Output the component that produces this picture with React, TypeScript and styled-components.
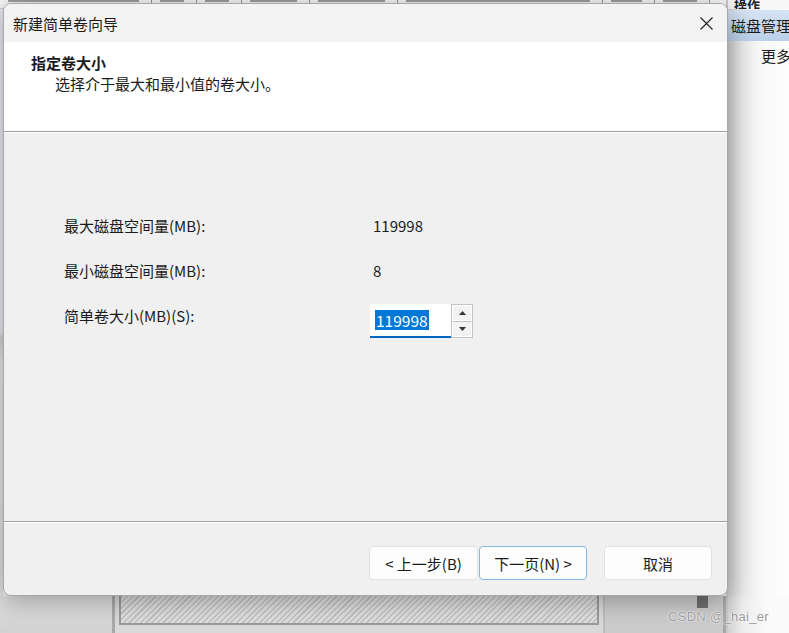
import React from "react";
import styled, { createGlobalStyle } from "styled-components";

const Global = createGlobalStyle`
  html, body { margin: 0; padding: 0; width: 789px; height: 633px; overflow: hidden; }
  body { font-family: "Noto Sans CJK SC", "Noto Sans", sans-serif; color: #1b1b1b; }
  * { box-sizing: border-box; }
`;

const Desktop = styled.div`
  position: relative;
  width: 789px;
  height: 633px;
  overflow: hidden;
  display: grid;
  grid-template-columns: 726px 63px;
  grid-template-rows: 9px 1fr 37px;
  background: #f0f0f0;
`;

const HeaderStrip = styled.div`
  display: flex;
  background: #f7f7f7;
  border-bottom: 1px solid #cfcfcf;
`;

const HeaderCell = styled.div<{ $w: number }>`
  width: ${(p) => p.$w}px;
  flex: none;
  border-right: 1px solid #9c9c9c;
  position: relative;
  &::after {
    content: "";
    position: absolute;
    left: 8px;
    right: 12px;
    top: 0;
    height: 2px;
    background: #555;
    opacity: 0.55;
  }
`;

const ActionHeader = styled.div`
  background: #f7f7f7;
  border-left: 2px solid #c8c8c8;
  font-size: 13px;
  font-weight: 700;
  line-height: 9px;
  padding-left: 6px;
  overflow: hidden;
  color: #222;
  display: flex;
  align-items: flex-end;
`;

const BackArea = styled.div`
  background: #f0f0f0;
  display: flex;
`;

const LeftEdge = styled.div`
  width: 3px;
  background: linear-gradient(to bottom, #e6e9ee 0%, #e6e9ee 55%, #d2d2d2 56%, #e6e6e6 60%, #e0e0e0 100%);
`;

const ActionPanel = styled.div`
  border-left: 2px solid #c8c8c8;
  background: linear-gradient(to right, #cfcfcf 0px, #e8e8e8 14px, #f8f8f8 34px, #fdfdfd 60px);
  display: flex;
  flex-direction: column;
  padding-top: 1px;
`;

const ActionTitle = styled.div`
  height: 31px;
  background: linear-gradient(to bottom, #d6e3f3, #b9cfe9);
  font-size: 15px;
  line-height: 31px;
  padding-left: 3px;
  white-space: nowrap;
  overflow: hidden;
  color: #1a1a1a;
`;

const ActionItem = styled.div`
  font-size: 15px;
  padding: 4px 0 0 33px;
  white-space: nowrap;
  overflow: hidden;
  color: #1a1a1a;
`;

const BottomLeft = styled.div`
  display: flex;
  background: #c9c9c9;
`;

const GrayBlock = styled.div`
  width: 115px;
  background: linear-gradient(to bottom, #dedede, #d2d2d2);
  border-right: 3px solid #a9a9a9;
`;

const HatchWrap = styled.div`
  width: 490px;
  padding: 0 4px 8px 4px;
  background: #d9d9d9;
  border-right: 2px solid #bdbdbd;
  display: flex;
  flex-direction: column;
`;

const Hatch = styled.div`
  flex: 1;
  border: 2px solid #9a9a9a;
  border-top: none;
  background: repeating-linear-gradient(
    135deg,
    #c2c2c2 0px,
    #c2c2c2 1.5px,
    #dedede 1.5px,
    #dedede 4px
  );
`;

const RightGray = styled.div`
  flex: 1;
  background: #cbcbcb;
  display: flex;
  justify-content: flex-end;
  padding-right: 15px;
  border-right: 3px solid #a8a8a8;
`;

const DarkBlock = styled.div`
  width: 11px;
  height: 12px;
  background: #6f6f6f;
`;

const BottomRight = styled.div`
  border-left: 2px solid #c8c8c8;
  background: linear-gradient(to right, #d2d2d2 0px, #ececec 14px, #fafafa 40px);
`;

const Watermark = styled.div`
  position: absolute;
  left: 668px;
  top: 609px;
  font-family: "Liberation Sans", Arial, sans-serif;
  font-size: 13px;
  color: #9a9a9a;
  text-shadow: 0 0 1px #fff, 0 0 2px #fff;
  letter-spacing: 0.3px;
`;

/* ---------- Dialog ---------- */

const Dialog = styled.div`
  position: absolute;
  left: 3px;
  top: 3px;
  width: 725px;
  height: 593px;
  border-radius: 8px;
  overflow: hidden;
  background: #f0f0f0;
  border: 1px solid #a8a8a8;
  box-shadow: 0 4px 26px rgba(0, 0, 0, 0.32);
  display: flex;
  flex-direction: column;
`;

const TitleBar = styled.div`
  height: 38px;
  flex: none;
  background: #f3f3f3;
  display: flex;
  align-items: center;
  justify-content: space-between;
  padding: 0 9px 0 9px;
  font-size: 15px;
`;

const CloseBtn = styled.div`
  width: 24px;
  height: 24px;
  display: flex;
  align-items: center;
  justify-content: center;
`;

const Banner = styled.div`
  height: 90px;
  flex: none;
  background: #ffffff;
  border-bottom: 1px solid #a0a0a0;
  box-shadow: 0 1px 0 #ffffff;
  padding: 11px 0 0 27px;
`;

const BannerTitle = styled.div`
  font-size: 15px;
  font-weight: 700;
  line-height: 20px;
`;

const BannerSub = styled.div`
  font-size: 15px;
  line-height: 22px;
  padding-left: 24px;
`;

const Body = styled.div`
  flex: 1;
  padding: 71px 0 0 60px;
  display: grid;
  grid-template-columns: 306px auto;
  grid-auto-rows: 45px;
  align-content: start;
  align-items: center;
  border-bottom: 1px solid #a0a0a0;
`;

const Label = styled.div`
  font-size: 15px;
`;

const Value = styled.div`
  font-size: 15px;
  padding-left: 3px;
`;

const SpinBox = styled.div`
  display: flex;
  align-items: stretch;
  height: 34px;
  margin-top: 10px;
`;

const SpinInput = styled.div`
  width: 81px;
  background: #ffffff;
  border-bottom: 2px solid #0067c0;
  display: flex;
  align-items: center;
  padding-left: 5px;
  font-size: 15.5px;
`;

const Selected = styled.span`
  background: #0078d7;
  color: #ffffff;
  line-height: 20px;
  padding: 0 1px;
`;

const SpinButtons = styled.div`
  width: 22px;
  display: flex;
  flex-direction: column;
  border: 1px solid #c4c4c4;
  background: #e9e9e9;
`;

const SpinBtn = styled.div<{ $down?: boolean }>`
  flex: 1;
  display: flex;
  align-items: center;
  justify-content: center;
  background: #f3f3f3;
  border: 1px solid #ffffff;
  ${(p) => (p.$down ? "border-top: 1px solid #c4c4c4;" : "")}
`;

const Footer = styled.div`
  height: 73px;
  flex: none;
  border-top: 1px solid #ffffff;
  display: flex;
  justify-content: flex-end;
  align-items: flex-start;
  padding: 23px 15px 0 0;
`;

const ButtonGroup = styled.div`
  display: flex;
  gap: 1px;
  margin-right: 17px;
`;

const Button = styled.div<{ $focused?: boolean; $w?: number }>`
  width: ${(p) => p.$w ?? 108}px;
  height: 34px;
  background: #fdfdfd;
  border: 1px solid ${(p) => (p.$focused ? "#82b7e4" : "#e1e1e1")};
  border-radius: 4px;
  display: flex;
  align-items: center;
  justify-content: center;
  font-size: 15px;
  color: #1b1b1b;
`;

const Tri = ({ down }: { down?: boolean }) => (
  <svg width="7" height="4" viewBox="0 0 7 4">
    {down ? <polygon points="0,0 7,0 3.5,4" fill="#333" /> : <polygon points="0,4 7,4 3.5,0" fill="#333" />}
  </svg>
);

export default function App() {
  const cols = [152, 45, 45, 68, 88, 205, 52, 55];
  return (
    <>
      <Global />
      <Desktop>
        <HeaderStrip>
          {cols.map((w, i) => (
            <HeaderCell key={i} $w={w} />
          ))}
        </HeaderStrip>
        <ActionHeader>操作</ActionHeader>

        <BackArea>
          <LeftEdge />
        </BackArea>
        <ActionPanel>
          <ActionTitle>磁盘管理</ActionTitle>
          <ActionItem>更多操作</ActionItem>
        </ActionPanel>

        <BottomLeft>
          <GrayBlock />
          <HatchWrap>
            <Hatch />
          </HatchWrap>
          <RightGray>
            <DarkBlock />
          </RightGray>
        </BottomLeft>
        <BottomRight />

        <Dialog>
          <TitleBar>
            <span>新建简单卷向导</span>
            <CloseBtn>
              <svg width="13" height="13" viewBox="0 0 13 13">
                <path d="M0.5 0.5 L12.5 12.5 M12.5 0.5 L0.5 12.5" stroke="#222" strokeWidth="1.1" fill="none" />
              </svg>
            </CloseBtn>
          </TitleBar>
          <Banner>
            <BannerTitle>指定卷大小</BannerTitle>
            <BannerSub>选择介于最大和最小值的卷大小。</BannerSub>
          </Banner>
          <Body>
            <Label>最大磁盘空间量(MB):</Label>
            <Value>119998</Value>
            <Label>最小磁盘空间量(MB):</Label>
            <Value>8</Value>
            <Label>简单卷大小(MB)(S):</Label>
            <SpinBox>
              <SpinInput>
                <Selected>119998</Selected>
              </SpinInput>
              <SpinButtons>
                <SpinBtn>
                  <Tri />
                </SpinBtn>
                <SpinBtn $down>
                  <Tri down />
                </SpinBtn>
              </SpinButtons>
            </SpinBox>
          </Body>
          <Footer>
            <ButtonGroup>
              <Button $w={109}>&lt; 上一步(B)</Button>
              <Button $focused>下一页(N) &gt;</Button>
            </ButtonGroup>
            <Button>取消</Button>
          </Footer>
        </Dialog>
        <Watermark>CSDN @_hai_er</Watermark>
      </Desktop>
    </>
  );
}
